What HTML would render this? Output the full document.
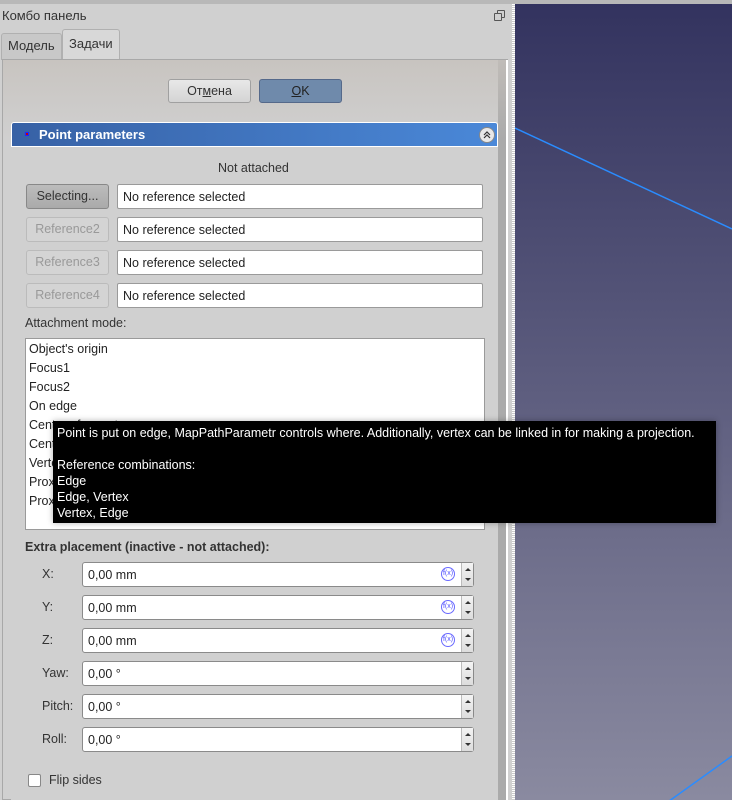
<!DOCTYPE html>
<html><head><meta charset="utf-8"><style>
*{box-sizing:border-box;margin:0;padding:0}
body{width:732px;height:800px;overflow:hidden;background:#d0d0d0;font-family:"Liberation Sans","DejaVu Sans",sans-serif;font-size:12.5px;color:#222;position:relative}
.a{position:absolute}
.t{white-space:nowrap}
.btn{border:1px solid #a0a0a0;border-radius:3px;background:linear-gradient(#e8e8e8,#d4d4d4);text-align:center;line-height:22px}
.inp{background:#fff;border:1px solid #9a9a9a;border-radius:2px;padding-left:5px;line-height:24px}
.spin{background:#fff;border:1px solid #8a8a8a;border-radius:3px;padding-left:5px;line-height:24px;height:25px}
.arr{position:absolute;right:0;top:0;width:12px;height:23px;border-left:1px solid #bbb;background:linear-gradient(#f4f4f4,#ddd)}
.arr:before{content:"";position:absolute;left:3px;top:5px;border:3px solid transparent;border-bottom:3px solid #333;border-top:0}
.arr:after{content:"";position:absolute;left:3px;bottom:5px;border:3px solid transparent;border-top:3px solid #333;border-bottom:0}
.fx{position:absolute;right:18px;top:4px;width:14px;height:14px;border:1px solid #6a6aff;border-radius:50%;font-size:7px;color:#5050ff;text-align:center;line-height:12px}
</style></head><body>
<div class="a" style="left:0;top:0;width:732px;height:4px;background:#b8b8b8"></div>
<div class="a t" style="left:2px;top:8px;font-size:13px;color:#333">Комбо панель</div>
<div class="a" style="left:497px;top:10px;width:8px;height:8px;border:1px solid #555;border-radius:1px"></div>
<div class="a" style="left:494px;top:13px;width:8px;height:8px;border:1px solid #555;border-radius:1px;background:#d0d0d0"></div>
<div class="a" style="left:1px;top:33px;width:61px;height:27px;border:1px solid #b0b0b0;border-bottom:0;background:#c8c8c8;border-radius:3px 3px 0 0"></div>
<div class="a t" style="left:8px;top:38px;color:#333;font-size:13px">Модель</div>
<div class="a" style="left:62px;top:29px;width:58px;height:31px;border:1px solid #b0b0b0;border-bottom:0;background:#d8d8d8;border-radius:3px 3px 0 0"></div>
<div class="a t" style="left:69px;top:36px;color:#333;font-size:13px">Задачи</div>
<div class="a" style="left:2px;top:59px;width:506px;height:741px;border:1px solid #a8a8a8;background:linear-gradient(#c8c4c0 0,#d0d0d0 80px)"></div>
<div class="a" style="left:498px;top:60px;width:8px;height:740px;background:linear-gradient(#c0bcb8,#aaa 80px)"></div>
<div class="a" style="left:506px;top:60px;width:2px;height:740px;background:#fff"></div>
<div class="a" style="left:512px;top:4px;width:3px;height:796px;background:repeating-linear-gradient(#fff 0 1px,#ccc 1px 2px)"></div>
<div class="a" style="left:515px;top:4px;width:217px;height:796px;background:linear-gradient(#33335f,#8a8aa0)"></div>
<svg class="a" style="left:515px;top:4px" width="217" height="796"><line x1="0" y1="124" x2="217" y2="225" stroke="#2a8cff" stroke-width="1.5"/><line x1="150" y1="800" x2="217" y2="752" stroke="#2a8cff" stroke-width="1.5"/></svg>
<div class="a btn" style="left:168px;top:79px;width:83px;height:24px;color:#333">От<u>м</u>ена</div>
<div class="a btn" style="left:259px;top:79px;width:83px;height:24px;background:#6f8aab;border-color:#55698a;color:#222"><u>O</u>K</div>
<div class="a" style="left:11px;top:122px;width:487px;height:25px;border:1px solid #fff;border-radius:3px 3px 0 0;background:linear-gradient(90deg,#3761a5,#4a88d8)"></div>
<div class="a" style="left:25px;top:132px;width:4px;height:4px;background:#c00;border:1px solid #22f"></div>
<div class="a t" style="left:39px;top:127px;color:#fff;font-weight:bold;font-size:13px">Point parameters</div>
<svg class="a" style="left:479px;top:127px" width="16" height="16"><circle cx="8" cy="8" r="7.5" fill="#e8e8e8" stroke="#888"/><path d="M5 8 L8 5 L11 8 M5 11 L8 8 L11 11" fill="none" stroke="#333" stroke-width="1.2"/></svg>
<div class="a" style="left:11px;top:147px;width:487px;height:653px;background:#d0d0d0"></div>
<div class="a t" style="left:218px;top:161px;color:#333">Not attached</div>
<div class="a btn" style="left:26px;top:184px;width:83px;height:25px;background:linear-gradient(#bcbcbc,#aaa);border-color:#888;color:#333">Selecting...</div>
<div class="a inp" style="left:117px;top:184px;width:366px;height:25px">No reference selected</div>
<div class="a btn" style="left:26px;top:217px;width:83px;height:25px;background:#d4d4d4;border-color:#bbb;color:#999">Reference2</div>
<div class="a inp" style="left:117px;top:217px;width:366px;height:25px">No reference selected</div>
<div class="a btn" style="left:26px;top:250px;width:83px;height:25px;background:#d4d4d4;border-color:#bbb;color:#999">Reference3</div>
<div class="a inp" style="left:117px;top:250px;width:366px;height:25px">No reference selected</div>
<div class="a btn" style="left:26px;top:283px;width:83px;height:25px;background:#d4d4d4;border-color:#bbb;color:#999">Reference4</div>
<div class="a inp" style="left:117px;top:283px;width:366px;height:25px">No reference selected</div>
<div class="a t" style="left:25px;top:316px;color:#333">Attachment mode:</div>
<div class="a" style="left:25px;top:338px;width:460px;height:192px;background:#fff;border:1px solid #9a9a9a"></div>
<div class="a" style="left:29px;top:340px;line-height:19px">Object's origin<br>Focus1<br>Focus2<br>On edge<br>Center of curvature<br>Center of mass<br>Vertex<br>Proximity<br>Proximity</div>
<div class="a" style="left:53px;top:421px;width:663px;height:102px;background:#000;color:#fff;padding:4px 4px;line-height:16px;white-space:nowrap;box-shadow:0 0 6px rgba(0,0,0,.3)">Point is put on edge, MapPathParametr controls where. Additionally, vertex can be linked in for making a projection.<br><br>Reference combinations:<br>Edge<br>Edge, Vertex<br>Vertex, Edge</div>
<div class="a t" style="left:25px;top:540px;font-weight:bold;color:#333">Extra placement (inactive - not attached):</div>
<div class="a t" style="left:42px;top:567px;color:#333">X:</div>
<div class="a spin" style="left:82px;top:562px;width:392px">0,00 mm<div class="fx">f(x)</div><div class="arr"></div></div>
<div class="a t" style="left:42px;top:600px;color:#333">Y:</div>
<div class="a spin" style="left:82px;top:595px;width:392px">0,00 mm<div class="fx">f(x)</div><div class="arr"></div></div>
<div class="a t" style="left:42px;top:633px;color:#333">Z:</div>
<div class="a spin" style="left:82px;top:628px;width:392px">0,00 mm<div class="fx">f(x)</div><div class="arr"></div></div>
<div class="a t" style="left:42px;top:666px;color:#333">Yaw:</div>
<div class="a spin" style="left:82px;top:661px;width:392px">0,00 °<div class="arr"></div></div>
<div class="a t" style="left:42px;top:699px;color:#333">Pitch:</div>
<div class="a spin" style="left:82px;top:694px;width:392px">0,00 °<div class="arr"></div></div>
<div class="a t" style="left:42px;top:732px;color:#333">Roll:</div>
<div class="a spin" style="left:82px;top:727px;width:392px">0,00 °<div class="arr"></div></div>
<div class="a" style="left:28px;top:774px;width:13px;height:13px;background:#fff;border:1px solid #888;border-radius:2px"></div>
<div class="a t" style="left:49px;top:773px;color:#333">Flip sides</div>
</body></html>
